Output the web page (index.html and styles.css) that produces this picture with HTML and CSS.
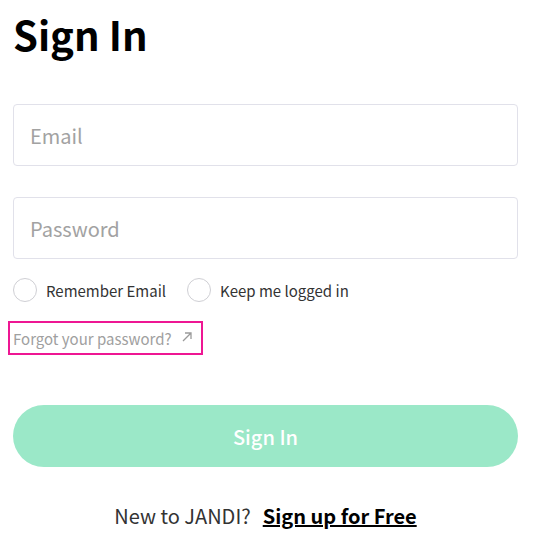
FILE: index.html
```html
<!DOCTYPE html>
<html>
<head>
<meta charset="utf-8">
<link rel="stylesheet" href="styles.css">
</head>
<body>
<main class="page">
  <h1 class="title">Sign In</h1>
  <form class="form">
    <input class="field" type="email" placeholder="Email">
    <input class="field" type="password" placeholder="Password">
    <div class="options">
      <label class="opt"><span class="circle"></span>Remember Email</label>
      <label class="opt"><span class="circle"></span>Keep me logged in</label>
    </div>
    <a class="forgot" href="#">Forgot your password?
      <svg class="arrow" width="12" height="12" viewBox="0 0 12 12"><path d="M2 10 L10 2 M4 2 H10 V8" fill="none" stroke="#9a9a9a" stroke-width="1.3"/></svg>
    </a>
    <button class="submit" type="button">Sign In</button>
  </form>
  <p class="signup">New to JANDI?<a class="signup-link" href="#">Sign up for Free</a></p>
</main>
</body>
</html>
```
FILE: styles.css
```css
html, body {
  margin: 0;
  padding: 0;
  background: #fff;
}
body {
  font-family: "Noto Sans CJK KR", "Noto Sans", sans-serif;
}
.page {
  width: 505px;
  padding: 0 0 0 13px;
}
.title {
  margin: 0;
  padding-top: 7px;
  font-size: 40px;
  line-height: 55px;
  font-weight: 700;
  color: #000;
}
.form {
  display: flex;
  flex-direction: column;
  margin-top: 42px;
}
.field {
  box-sizing: border-box;
  height: 62px;
  border: 1px solid #e1e1ea;
  border-radius: 4px;
  padding: 0 16px;
  font-family: inherit;
  font-size: 20px;
  color: #333;
  margin: 0 0 31px 0;
  outline: none;
}
.field::placeholder {
  color: #a2a2a2;
}
.field + .field {
  margin-bottom: 9px;
}
.options {
  display: flex;
  gap: 21px;
  height: 44px;
  align-items: center;
}
.opt {
  display: flex;
  align-items: center;
  gap: 9px;
  font-size: 15px;
  color: #333;
}
.circle {
  box-sizing: border-box;
  width: 24px;
  height: 24px;
  border: 1px solid #cfcfd4;
  border-radius: 50%;
}
.forgot {
  align-self: flex-start;
  display: flex;
  align-items: center;
  gap: 9px;
  margin: 9px 0 0 -5px;
  box-sizing: border-box;
  height: 34px;
  padding: 0 8px 0 3px;
  border: 2px solid #ee1793;
  font-size: 15px;
  color: #a0a0a0;
  text-decoration: none;
}
.arrow {
  margin-top: -2px;
}
.submit {
  margin-top: 50px;
  height: 62px;
  border: none;
  border-radius: 31px;
  background: #9be8c8;
  color: #fff;
  font-family: inherit;
  font-size: 20px;
  font-weight: 500;
}
.signup {
  margin: 34px 0 0 0;
  text-align: center;
  font-size: 20px;
  color: #333;
}
.signup-link {
  margin-left: 12px;
  font-weight: 700;
  color: #000;
  text-decoration: underline;
}
```
